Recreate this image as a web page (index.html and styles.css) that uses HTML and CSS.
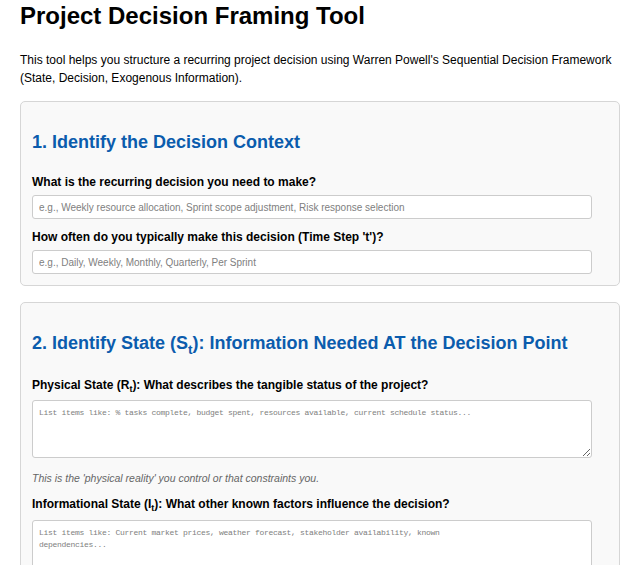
FILE: index.html
```html
<!DOCTYPE html>
<html lang="en">
<head>
<meta charset="utf-8">
<title>Project Decision Framing Tool</title>
<link rel="stylesheet" href="styles.css">
</head>
<body>
<div class="page">
  <h1 class="title">Project Decision Framing Tool</h1>
  <p class="intro">This tool helps you structure a recurring project decision using Warren Powell's Sequential Decision Framework (State, Decision, Exogenous Information).</p>

  <section class="card">
    <h2 class="card-title">1. Identify the Decision Context</h2>
    <label class="field-label" for="decision">What is the recurring decision you need to make?</label>
    <input class="text-input" id="decision" type="text" placeholder="e.g., Weekly resource allocation, Sprint scope adjustment, Risk response selection">
    <label class="field-label" for="frequency">How often do you typically make this decision (Time Step 't')?</label>
    <input class="text-input" id="frequency" type="text" placeholder="e.g., Daily, Weekly, Monthly, Quarterly, Per Sprint">
  </section>

  <section class="card">
    <h2 class="card-title">2. Identify State (S<sub>t</sub>): Information Needed AT the Decision Point</h2>
    <label class="field-label" for="physical">Physical State (R<sub>t</sub>): What describes the tangible status of the project?</label>
    <textarea class="text-area" id="physical" placeholder="List items like: % tasks complete, budget spent, resources available, current schedule status..."></textarea>
    <p class="hint">This is the 'physical reality' you control or that constraints you.</p>
    <label class="field-label" for="info">Informational State (I<sub>t</sub>): What other known factors influence the decision?</label>
    <textarea class="text-area" id="info" placeholder="List items like: Current market prices, weather forecast, stakeholder availability, known dependencies..."></textarea>
  </section>
</div>
</body>
</html>
```
FILE: styles.css
```css
html, body {
  margin: 0;
  padding: 0;
  background: #ffffff;
}
body {
  font-family: "Liberation Sans", Arial, sans-serif;
  color: #000;
}
.page {
  width: 600px;
  padding: 0 0 0 20px;
}
.title {
  font-size: 24px;
  font-weight: bold;
  margin: 2px 0 0;
  line-height: 28px;
}
.intro {
  font-size: 12px;
  line-height: 18px;
  margin: 21px 0 14px;
}
.card {
  background: #f9f9f9;
  border: 1px solid #d6d6d6;
  border-radius: 5px;
  padding: 11px 27px 11px 11px;
  margin-bottom: 16px;
}
.card-title {
  color: #0b5cad;
  font-size: 18px;
  font-weight: bold;
  line-height: 21px;
  margin: 19px 0 22px;
}
.card-title sub, .field-label sub {
  font-size: 0.75em;
  line-height: 1;
}
.field-label {
  display: block;
  font-size: 12px;
  font-weight: bold;
  line-height: 14px;
  margin: 0 0 6px;
}
.text-input {
  display: block;
  box-sizing: border-box;
  width: 560px;
  height: 24px;
  margin: 0 0 11px;
  padding: 0 6px;
  border: 1px solid #cccccc;
  border-radius: 3px;
  background: #fff;
  font-family: "Liberation Sans", Arial, sans-serif;
  font-size: 10px;
}
.text-input:last-child {
  margin-bottom: 0;
}
.text-input::placeholder, .text-area::placeholder {
  color: #808080;
}
.text-area {
  display: block;
  box-sizing: border-box;
  width: 560px;
  height: 58px;
  margin: 0;
  padding: 6px 80px 6px 6px;
  border: 1px solid #cccccc;
  border-radius: 3px;
  background: #fff;
  font-family: "Liberation Mono", monospace;
  font-size: 8px;
  letter-spacing: -0.3px;
  line-height: 12px;
}
.hint {
  font-size: 10.5px;
  font-style: italic;
  color: #666;
  margin: 14px 0 13px;
}
```
